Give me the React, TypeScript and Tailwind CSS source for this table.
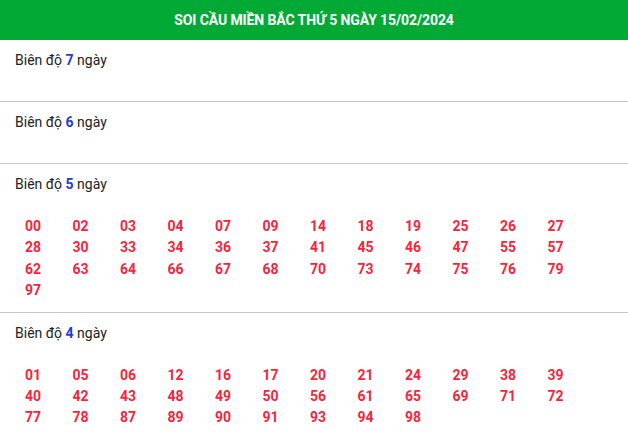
const sections: { days: number; nums: string[] }[] = [
  { days: 7, nums: [] },
  { days: 6, nums: [] },
  {
    days: 5,
    nums: [
      "00", "02", "03", "04", "07", "09", "14", "18", "19", "25", "26", "27",
      "28", "30", "33", "34", "36", "37", "41", "45", "46", "47", "55", "57",
      "62", "63", "64", "66", "67", "68", "70", "73", "74", "75", "76", "79",
      "97",
    ],
  },
  {
    days: 4,
    nums: [
      "01", "05", "06", "12", "16", "17", "20", "21", "24", "29", "38", "39",
      "40", "42", "43", "48", "49", "50", "56", "61", "65", "69", "71", "72",
      "77", "78", "87", "89", "90", "91", "93", "94", "98",
    ],
  },
];

export default function App() {
  return (
    <div className="w-[628px] h-[439px] overflow-hidden bg-white font-['Roboto',sans-serif]">
      {/* header */}
      <div className="h-10 bg-[#03a935] flex items-center justify-center">
        <h1 className="text-white font-bold text-[14px] tracking-[-0.1px]">
          SOI CẦU MIỀN BẮC THỨ 5 NGÀY 15/02/2024
        </h1>
      </div>

      {sections.map((s) => (
        <div key={s.days} className="border-b border-[#c6c6c6] pt-[10px] pb-[10px]">
          <p className="px-[15px] text-[14px] leading-5 text-[#222]">
            Biên độ <span className="font-bold text-[#1f3bd6]">{s.days}</span> ngày
          </p>
          {s.nums.length > 0 ? (
            <div className="mt-[22px] pl-[25px] grid grid-cols-[repeat(12,47.5px)]">
              {s.nums.map((n) => (
                <span key={n} className="text-[14px] leading-[21.4px] font-bold text-[#f8243c]">
                  {n}
                </span>
              ))}
            </div>
          ) : (
            <div className="mt-[21px]" />
          )}
        </div>
      ))}
    </div>
  );
}
